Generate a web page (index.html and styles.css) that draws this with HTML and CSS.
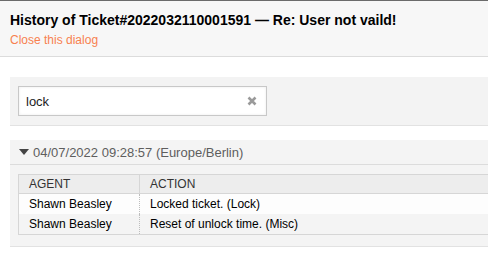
FILE: index.html
```html
<!DOCTYPE html>
<html>
<head>
<meta charset="utf-8">
<link rel="stylesheet" href="styles.css">
</head>
<body>
<div class="header">
  <h1 class="title">History of Ticket#2022032110001591 — Re: User not vaild!</h1>
  <a class="close" href="#">Close this dialog</a>
</div>
<div class="filter">
  <div class="input">
    <span class="value">lock</span>
    <svg class="clear" width="10" height="10" viewBox="0 0 10 10"><path d="M1.5 1.5 L8.5 8.5 M8.5 1.5 L1.5 8.5" stroke="#9a9a9a" stroke-width="2.6" stroke-linecap="butt"/></svg>
  </div>
</div>
<div class="section">
  <div class="section-head">
    <svg class="arrow" width="10" height="6" viewBox="0 0 10 6"><path d="M0 0 L10 0 L5 6 Z" fill="#444"/></svg>
    <span>04/07/2022 09:28:57 (Europe/Berlin)</span>
  </div>
  <div class="section-body">
    <table class="history">
      <thead>
        <tr><th class="agent">AGENT</th><th>ACTION</th></tr>
      </thead>
      <tbody>
        <tr><td class="agent">Shawn Beasley</td><td>Locked ticket. (Lock)</td></tr>
        <tr class="even"><td class="agent">Shawn Beasley</td><td>Reset of unlock time. (Misc)</td></tr>
      </tbody>
    </table>
  </div>
</div>
</body>
</html>
```
FILE: styles.css
```css
html, body {
  margin: 0;
  padding: 0;
  background: #fff;
  font-family: "Liberation Sans", Arial, sans-serif;
  color: #000;
  overflow: hidden;
}
body {
  border-top: 1px solid #6b6b6b;
}
.header {
  background: #f7f7f7;
  border-bottom: 1px solid #dcdcdc;
  padding: 10px 10px 0 10px;
  height: 45px;
  box-sizing: content-box;
}
.title {
  margin: 0;
  font-size: 14px;
  font-weight: bold;
  line-height: 18px;
  color: #000;
}
.close {
  display: block;
  margin-top: 3px;
  font-size: 12px;
  line-height: 16px;
  color: #f7814f;
  text-decoration: none;
}
.filter {
  margin: 20px 0 0 10px;
  background: #f3f3f3;
  border-bottom: 1px solid #e2e2e2;
  padding: 9px 8px 9px 8px;
}
.input {
  height: 28px;
  border: 1px solid #c8c8c8;
  background: #fff;
  box-shadow: inset 0 0 3px rgba(0,0,0,0.08);
  display: flex;
  align-items: center;
  justify-content: space-between;
  padding: 0 9px 0 7px;
  box-sizing: content-box;
  width: 231px;
}
.value {
  font-size: 13px;
  color: #222;
}
.clear {
  display: block;
}
.section {
  margin: 14px 0 0 10px;
  background: #f4f4f4;
  border-bottom: 1px solid #e2e2e2;
}
.section-head {
  height: 24px;
  border-bottom: 1px solid #dcdcdc;
  display: flex;
  align-items: center;
  padding-left: 9px;
  gap: 4px;
  font-size: 13px;
  color: #5e5e5e;
}
.arrow {
  display: block;
}
.section-body {
  padding: 9px 0 11px 8px;
}
.history {
  width: 100%;
  border-collapse: collapse;
  font-size: 12px;
  border-left: 1px solid #d6d6d6;
  border-top: 1px solid #d6d6d6;
  border-bottom: 1px solid #d6d6d6;
}
.history th {
  background: #ededed;
  color: #333;
  font-weight: normal;
  text-align: left;
  height: 18px;
  padding: 0 10px;
  border-bottom: 1px solid #d6d6d6;
  line-height: 18px;
}
.history th.agent {
  border-right: 1px solid #d6d6d6;
}
.history td {
  height: 20px;
  padding: 0 10px;
  line-height: 20px;
  background: #fdfdfd;
  color: #000;
}
.history td.agent {
  width: 100px;
  border-right: 1px dotted #bdbdbd;
}
.history tr.even td {
  background: #f4f4f4;
}
```
